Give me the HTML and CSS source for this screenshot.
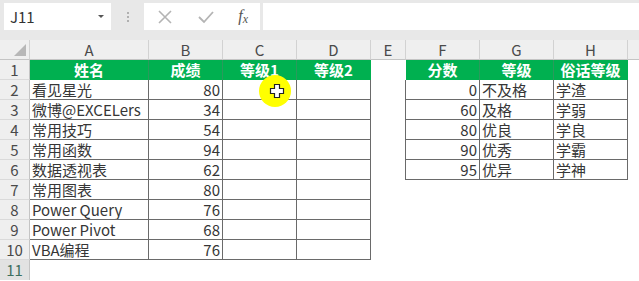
FILE: index.html
```html
<!DOCTYPE html>
<html lang="zh-CN">
<head>
<meta charset="utf-8">
<title>Excel</title>
<link rel="stylesheet" href="styles.css">
</head>
<body>
<div class="toolbar">
  <div class="namebox"><span class="ref">J11</span><span class="caret"></span></div>
  <div class="dots"><i></i><i></i><i></i></div>
  <div class="fxbox">
    <svg class="ico" width="16" height="16" viewBox="0 0 16 16"><path d="M2 2L14 14M14 2L2 14" stroke="#b4b4b4" stroke-width="1.6" fill="none"/></svg>
    <svg class="ico" width="18" height="16" viewBox="0 0 18 16"><path d="M2 8L7 13L16 3" stroke="#b4b4b4" stroke-width="1.8" fill="none"/></svg>
    <span class="fx">f<sub>x</sub></span>
  </div>
  <div class="formula"></div>
</div>
<div class="sheet">
  <table class="grid">
    <colgroup>
      <col class="w-rh"><col class="w-a"><col class="w-n"><col class="w-n"><col class="w-n"><col class="w-e"><col class="w-n"><col class="w-n"><col class="w-n"><col class="w-i">
    </colgroup>
    <tr class="colhdr">
      <th class="corner"><span class="tri"></span></th><th>A</th><th>B</th><th>C</th><th>D</th><th>E</th><th>F</th><th>G</th><th>H</th><th class="last"></th>
    </tr>
    <tr>
      <th class="rh">1</th><td class="hd">姓名</td><td class="hd">成绩</td><td class="hd">等级1</td><td class="hd hd-end">等级2</td><td></td><td class="hd">分数</td><td class="hd">等级</td><td class="hd hd-end">俗话等级</td><td></td>
    </tr>
    <tr>
      <th class="rh">2</th><td class="b">看见星光</td><td class="b num">80</td><td class="b"></td><td class="b"></td><td class="e"></td><td class="b num">0</td><td class="b">不及格</td><td class="b">学渣</td><td></td>
    </tr>
    <tr>
      <th class="rh">3</th><td class="b">微博@EXCELers</td><td class="b num">34</td><td class="b"></td><td class="b"></td><td class="e"></td><td class="b num">60</td><td class="b">及格</td><td class="b">学弱</td><td></td>
    </tr>
    <tr>
      <th class="rh">4</th><td class="b">常用技巧</td><td class="b num">54</td><td class="b"></td><td class="b"></td><td class="e"></td><td class="b num">80</td><td class="b">优良</td><td class="b">学良</td><td></td>
    </tr>
    <tr>
      <th class="rh">5</th><td class="b">常用函数</td><td class="b num">94</td><td class="b"></td><td class="b"></td><td class="e"></td><td class="b num">90</td><td class="b">优秀</td><td class="b">学霸</td><td></td>
    </tr>
    <tr>
      <th class="rh">6</th><td class="b">数据透视表</td><td class="b num">62</td><td class="b"></td><td class="b"></td><td class="e"></td><td class="b num">95</td><td class="b">优异</td><td class="b">学神</td><td></td>
    </tr>
    <tr>
      <th class="rh">7</th><td class="b">常用图表</td><td class="b num">80</td><td class="b"></td><td class="b"></td><td></td><td></td><td></td><td></td><td></td>
    </tr>
    <tr>
      <th class="rh">8</th><td class="b">Power Query</td><td class="b num">76</td><td class="b"></td><td class="b"></td><td></td><td></td><td></td><td></td><td></td>
    </tr>
    <tr>
      <th class="rh">9</th><td class="b">Power Pivot</td><td class="b num">68</td><td class="b"></td><td class="b"></td><td></td><td></td><td></td><td></td><td></td>
    </tr>
    <tr>
      <th class="rh">10</th><td class="b">VBA编程</td><td class="b num">76</td><td class="b"></td><td class="b"></td><td></td><td></td><td></td><td></td><td></td>
    </tr>
    <tr>
      <th class="rh sel">11</th><td></td><td></td><td></td><td></td><td></td><td></td><td></td><td></td><td></td>
    </tr>
  </table>
  <div class="cursor">
    <svg width="16" height="16" viewBox="0 0 16 16"><path d="M5.5 1.5H10.5V5.5H14.5V10.5H10.5V14.5H5.5V10.5H1.5V5.5H5.5Z" fill="#fff" stroke="#222" stroke-width="1.2"/></svg>
  </div>
</div>
</body>
</html>
```
FILE: styles.css
```css
html, body {
  margin: 0;
  padding: 0;
  background: #ffffff;
  font-family: "Noto Sans CJK SC", "Noto Sans", sans-serif;
  overflow: hidden;
}

.toolbar {
  height: 40px;
  background: #e8e8e8;
  display: flex;
  align-items: flex-start;
  padding: 3px 0 0 4px;
  box-sizing: border-box;
}

.namebox {
  width: 107px;
  height: 27px;
  background: #fff;
  box-sizing: border-box;
  display: flex;
  align-items: center;
  justify-content: space-between;
  padding: 0 7px 0 6px;
  font-size: 15px;
  color: #333;
}

.caret {
  width: 0;
  height: 0;
  border-left: 3px solid transparent;
  border-right: 3px solid transparent;
  border-top: 3px solid #555;
}

.dots {
  width: 33px;
  height: 27px;
  display: flex;
  flex-direction: column;
  align-items: center;
  justify-content: center;
  gap: 2px;
}

.dots i {
  width: 2px;
  height: 2px;
  background: #b0b0b0;
  display: block;
}

.fxbox {
  width: 116px;
  height: 27px;
  background: #fff;
  display: flex;
  align-items: center;
  padding: 0 12px 0 13px;
  box-sizing: border-box;
  justify-content: space-between;
}

.fx {
  font-family: "Liberation Serif", serif;
  font-style: italic;
  font-size: 16px;
  color: #555;
  line-height: 1;
}

.fx sub {
  font-size: 12px;
  vertical-align: -2px;
}

.formula {
  flex: 1;
  height: 27px;
  background: #fff;
  margin-left: 3px;
}

.sheet {
  position: relative;
}

.grid {
  border-collapse: separate;
  border-spacing: 0;
  table-layout: fixed;
  width: 639px;
  font-size: 15px;
  color: #363636;
}

.w-rh { width: 30px; }
.w-a { width: 119px; }
.w-n { width: 74px; }
.w-e { width: 35px; }
.w-i { width: 11px; }

.grid tr {
  height: 20px;
}

.grid th, .grid td {
  padding: 0 2px;
  height: 20px;
  box-sizing: border-box;
  line-height: 18px;
  white-space: nowrap;
  overflow: hidden;
}

.colhdr th {
  background: #efefef;
  color: #4a4a4a;
  font-weight: normal;
  border-right: 1px solid #d2d2d2;
  border-bottom: 1px solid #c4c4c4;
  text-align: center;
}

.colhdr th.last {
  border-right: none;
}

.corner {
  position: relative;
}

.tri {
  position: absolute;
  right: 3px;
  bottom: 3px;
  width: 0;
  height: 0;
  border-left: 12px solid transparent;
  border-bottom: 12px solid #b7b7b7;
}

.rh {
  background: #efefef;
  color: #4a4a4a;
  font-weight: normal;
  text-align: center;
  border-right: 1px solid #c4c4c4;
  border-bottom: 1px solid #dadada;
}

.rh.sel {
  background: #e2e2e2;
  color: #3d6f5f;
  border-bottom: none;
}

.hd {
  background: #00b050;
  color: #fff;
  font-weight: bold;
  text-align: center;
  border-right: 1px solid #2a9a5c;
}

.hd-end {
  border-right: 1px solid #00b050;
}

.b {
  border-right: 1px solid #6a6a6a;
  border-bottom: 1px solid #6a6a6a;
}

.e {
  border-right: 1px solid #6a6a6a;
}

.num {
  text-align: right;
}

.cursor {
  position: absolute;
  left: 259px;
  top: 35px;
  width: 32px;
  height: 32px;
  border-radius: 50%;
  background: radial-gradient(circle, #ffff00 0%, #ffff00 80%, rgba(255,255,0,0) 100%);
  display: flex;
  align-items: center;
  justify-content: center;
}

.cursor svg {
  margin-left: 3px;
}
```
